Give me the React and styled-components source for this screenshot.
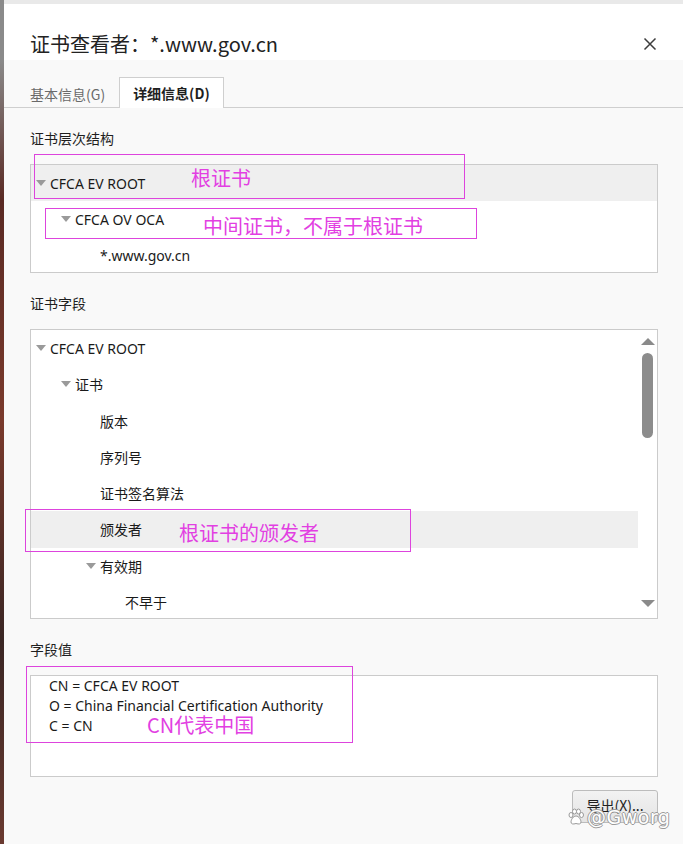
import React from "react";
import styled, { createGlobalStyle } from "styled-components";

const Global = createGlobalStyle`
  html, body { margin: 0; padding: 0; }
  body {
    width: 683px; height: 844px; overflow: hidden;
    background: #e9e9e9;
    font-family: "Noto Sans", "Noto Sans CJK SC", sans-serif;
    color: #1f1f1f;
  }
`;

const Page = styled.div`
  display: flex;
  width: 683px;
  height: 844px;
`;

const Strip = styled.div`
  width: 4px;
  flex: none;
  background: linear-gradient(#8a8a8a 0, #8a8a8a 60px, #5a2a24 200px, #7a3a2c 420px, #3a2624 640px, #6a3a30 844px);
`;

const Dialog = styled.div`
  flex: 1;
  margin-top: 4px;
  display: flex;
  flex-direction: column;
  background: #f9f9f9;
  position: relative;
`;

const TitleBar = styled.div`
  height: 56px;
  background: #fff;
  display: flex;
  align-items: flex-start;
  justify-content: space-between;
  padding: 26px 26px 0 26px;
  box-sizing: border-box;
`;

const Title = styled.div`
  font-family: "Noto Sans CJK SC", sans-serif;
  font-size: 20px;
  line-height: 28px;
  color: #222;
`;

const Close = styled.div`
  width: 14px;
  height: 14px;
  margin-top: 7px;
  display: flex;
`;

const TabBar = styled.div`
  height: 48px;
  display: flex;
  align-items: flex-end;
  padding-left: 25px;
  border-bottom: 1px solid #cfcfcf;
  box-sizing: border-box;
`;

const Tab = styled.div`
  height: ${(p) => (p.$active ? "31px" : "30px")};
  box-sizing: border-box;
  display: flex;
  align-items: center;
  font-family: "Noto Sans CJK SC", sans-serif;
  font-size: 14px;
  color: ${(p) => (p.$active ? "#1f1f1f" : "#6a6a6a")};
  font-weight: ${(p) => (p.$active ? 700 : 400)};
  background: ${(p) => (p.$active ? "#fff" : "transparent")};
  border: 1px solid ${(p) => (p.$active ? "#cfcfcf" : "transparent")};
  border-bottom: none;
  margin-bottom: -1px;
  margin-left: ${(p) => (p.$active ? "0" : "-12px")};
  padding: ${(p) => (p.$active ? "0 13px 0 13px" : "0 12px 0 12px")};
  padding-top: ${(p) => (p.$active ? "0" : "1px")};
  margin-right: ${(p) => (p.$active ? "0" : "1px")};
`;

const Body = styled.div`
  padding: 20px 25px 0 26px;
  display: flex;
  flex-direction: column;
`;

const Section = styled.section`
  position: relative;
  display: flex;
  flex-direction: column;
  gap: 16px;
  margin-bottom: 20px;
`;

const Label = styled.div`
  height: 20px;
  line-height: 20px;
  font-family: "Noto Sans CJK SC", sans-serif;
  font-size: 14px;
  color: #1f1f1f;
`;

const Box = styled.div`
  background: #fff;
  border: 1px solid #cbcbcb;
  height: ${(p) => p.$h}px;
  box-sizing: border-box;
  position: relative;
  display: flex;
  overflow: hidden;
`;

const TreeList = styled.div`
  flex: 1;
  display: flex;
  flex-direction: column;
`;

const Row = styled.div`
  height: ${(p) => p.$rh || 36}px;
  flex: none;
  display: flex;
  align-items: center;
  padding-left: ${(p) => 4 + p.$level * 25}px;
  background: ${(p) => (p.$sel ? "#efefef" : "transparent")};
  font-family: "Noto Sans", "Noto Sans CJK SC", sans-serif;
  font-size: 14px;
  color: #1a1a1a;
`;

const Caret = styled.span`
  width: 15px;
  flex: none;
  display: flex;
  align-items: center;
  &::before {
    content: "";
    display: ${(p) => (p.$show ? "block" : "none")};
    margin-left: 1px;
    border-left: 5px solid transparent;
    border-right: 5px solid transparent;
    border-top: 6px solid #9a9a9a;
  }
`;

const ScrollBar = styled.div`
  width: 19px;
  flex: none;
  display: flex;
  flex-direction: column;
  align-items: center;
  padding-top: 8px;
  box-sizing: border-box;
`;

const Arrow = styled.div`
  width: 0;
  height: 0;
  border-left: 7px solid transparent;
  border-right: 7px solid transparent;
  ${(p) => (p.$down ? "border-top: 7px solid #8a8a8a;" : "border-bottom: 7px solid #8a8a8a;")}
  margin-top: ${(p) => p.$mt || 0}px;
`;

const Thumb = styled.div`
  width: 11px;
  height: 85px;
  border-radius: 6px;
  background: #8c8c8c;
  margin-top: 8px;
`;

const Values = styled.div`
  padding: 0 0 0 18px;
  font-family: "Noto Sans", "Noto Sans CJK SC", sans-serif;
  font-size: 14px;
  line-height: 20px;
  color: #1a1a1a;
`;

const Note = styled.div`
  position: absolute;
  left: ${(p) => p.$x}px;
  top: ${(p) => p.$y}px;
  width: ${(p) => p.$w}px;
  height: ${(p) => p.$h}px;
  border: 1px solid #dd44dd;
  box-sizing: border-box;
  pointer-events: none;
`;

const NoteText = styled.div`
  position: absolute;
  left: ${(p) => p.$x}px;
  top: ${(p) => p.$y}px;
  font-family: "Noto Sans CJK SC", sans-serif;
  font-size: ${(p) => p.$fs || 20}px;
  line-height: 1;
  color: #e23fe2;
  white-space: nowrap;
`;

const Footer = styled.div`
  display: flex;
  justify-content: flex-end;
  padding: 13px 25px 0 0;
  margin-top: -20px;
`;

const Button = styled.button`
  width: 86px;
  height: 33px;
  border: 1px solid #bcbcbc;
  border-radius: 3px;
  background: linear-gradient(#f2f2f2, #e4e4e4);
  font-family: "Noto Sans CJK SC", sans-serif;
  font-size: 14px;
  color: #1f1f1f;
  padding: 0 0 4px 0;
`;

const Watermark = styled.div`
  position: absolute;
  left: 563px;
  top: 802px;
  display: flex;
  align-items: center;
  gap: 2px;
  font-family: "DejaVu Sans", sans-serif;
  font-size: 19px;
  color: #fff;
  letter-spacing: 0.5px;
  text-shadow: -1px 0 #9a9a9a, 1px 0 #9a9a9a, 0 -1px #9a9a9a, 0 1px #9a9a9a;
`;

const hier = [
  { t: "CFCA EV ROOT", l: 0, c: true, s: true },
  { t: "CFCA OV OCA", l: 1, c: true },
  { t: "*.www.gov.cn", l: 2 },
];

const fields = [
  { t: "CFCA EV ROOT", l: 0, c: true },
  { t: "证书", l: 1, c: true },
  { t: "版本", l: 2 },
  { t: "序列号", l: 2 },
  { t: "证书签名算法", l: 2 },
  { t: "颁发者", l: 2, s: true },
  { t: "有效期", l: 2, c: true },
  { t: "不早于", l: 3 },
];

const rowsOf = (list, rh) =>
  list.map((r, i) => (
    <Row key={i} $level={r.l} $sel={r.s} $rh={rh}>
      <Caret $show={r.c} />
      {r.t}
    </Row>
  ));

export default function App() {
  return (
    <>
      <Global />
      <Page>
        <Strip />
        <Dialog>
          <TitleBar>
            <Title>证书查看者：*.www.gov.cn</Title>
            <Close>
              <svg width="14" height="14" viewBox="0 0 14 14">
                <path d="M1.5 1.5 L12.5 12.5 M12.5 1.5 L1.5 12.5" stroke="#3c3c3c" strokeWidth="1.5" />
              </svg>
            </Close>
          </TitleBar>
          <TabBar>
            <Tab>基本信息(G)</Tab>
            <Tab $active>详细信息(D)</Tab>
          </TabBar>
          <Body>
            <Section>
              <Label>证书层次结构</Label>
              <Box $h={109}>
                <TreeList>{rowsOf(hier, 36)}</TreeList>
              </Box>
              <Note $x={4} $y={26} $w={431} $h={45} />
              <NoteText $x={161} $y={40}>根证书</NoteText>
              <Note $x={15} $y={80} $w={432} $h={31} />
              <NoteText $x={173} $y={88}>中间证书，不属于根证书</NoteText>
            </Section>
            <Section>
              <Label>证书字段</Label>
              <Box $h={290}>
                <TreeList>{rowsOf(fields, 36.25)}</TreeList>
                <ScrollBar>
                  <Arrow />
                  <Thumb />
                  <Arrow $down $mt={162} />
                </ScrollBar>
              </Box>
              <Note $x={-5} $y={216} $w={386} $h={43} />
              <NoteText $x={149} $y={230}>根证书的颁发者</NoteText>
            </Section>
            <Section>
              <Label>字段值</Label>
              <Box $h={102}>
                <Values>
                  <div>CN = CFCA EV ROOT</div>
                  <div>O = China Financial Certification Authority</div>
                  <div>C = CN</div>
                </Values>
              </Box>
              <Note $x={-4} $y={27} $w={327} $h={77} />
              <NoteText $x={117} $y={76} $fs={20}>CN代表中国</NoteText>
            </Section>
          </Body>
          <Footer>
            <Button>导出(X)...</Button>
          </Footer>
          <Watermark>
            <svg width="18" height="18" viewBox="0 0 18 18">
              <g fill="#fff" stroke="#9a9a9a" strokeWidth="1">
                <ellipse cx="4" cy="7" rx="2" ry="2.5" />
                <ellipse cx="7.5" cy="3.5" rx="2" ry="2.5" />
                <ellipse cx="11.5" cy="3.5" rx="2" ry="2.5" />
                <ellipse cx="14.5" cy="7" rx="2" ry="2.5" />
                <path d="M9 8 C6 8 4 12 4 14 C4 16 6 16.5 9 15.5 C12 16.5 14 16 14 14 C14 12 12 8 9 8 Z" />
              </g>
            </svg>
            @Gworg
          </Watermark>
        </Dialog>
      </Page>
    </>
  );
}
